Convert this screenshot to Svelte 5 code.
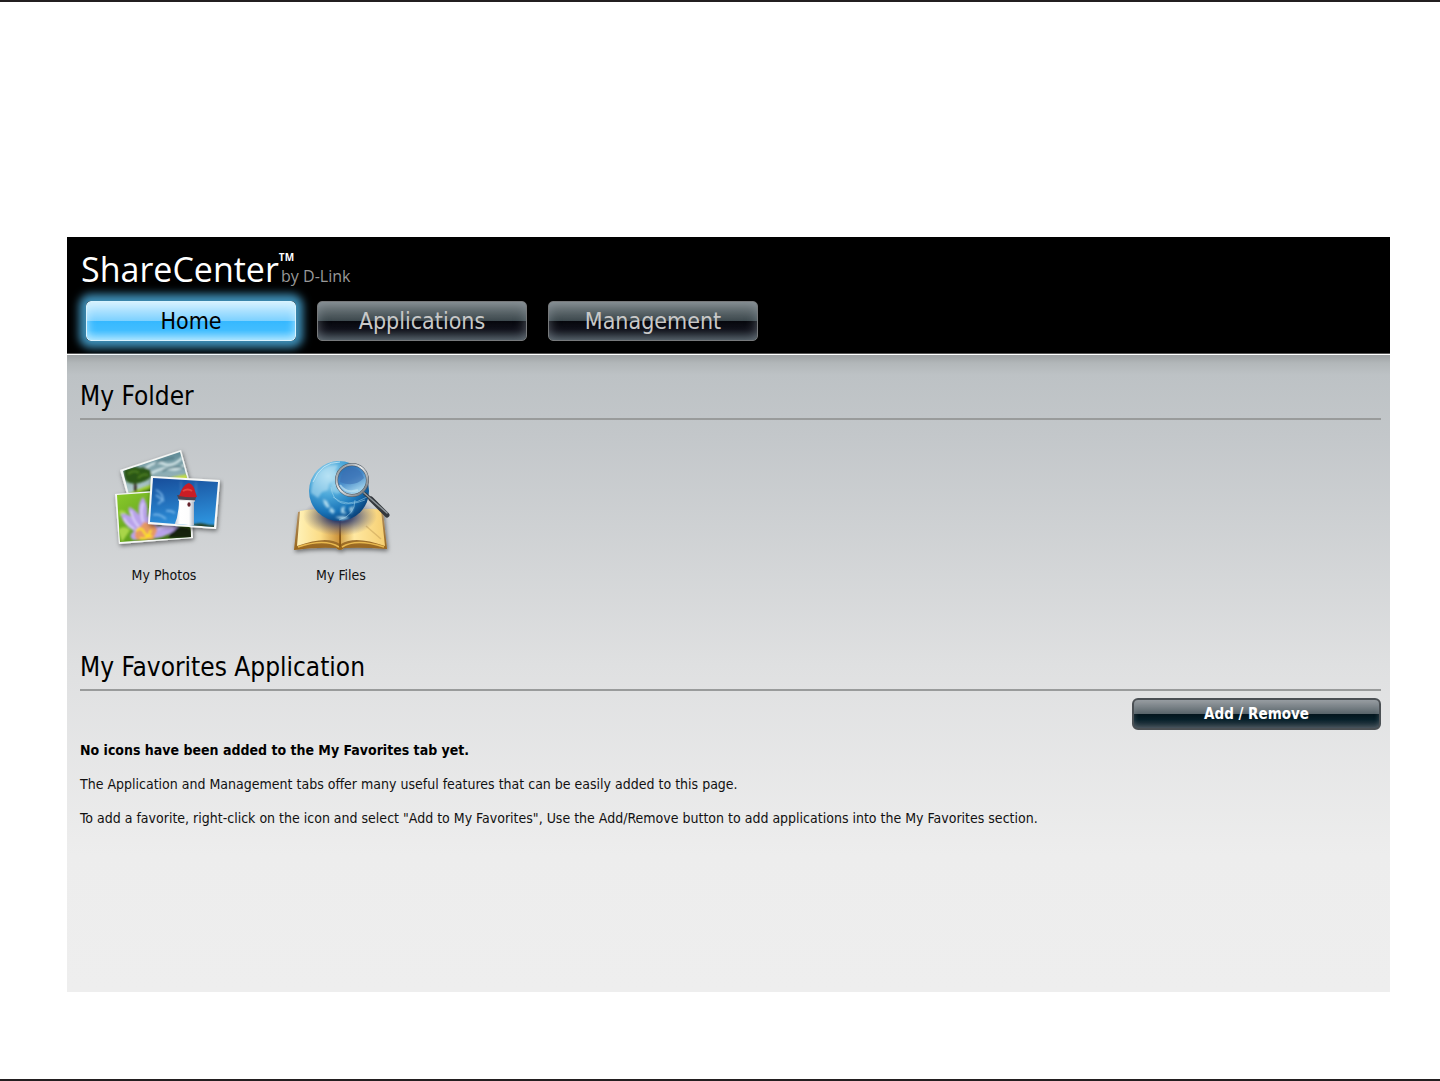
<script>
	const tabs = ['Home', 'Applications', 'Management'];

	let active = $state('Home');
</script>

<div class="page">
	<div class="frame">
		<header>
			<div class="logo">
				<span class="name">ShareCenter</span>
				<span class="tm">TM</span>
				<span class="by">by D-Link</span>
			</div>
			<nav>
				{#each tabs as tab}
					<button class="tab" class:active={tab === active} onclick={() => (active = tab)}>{tab}</button>
				{/each}
			</nav>
		</header>

		<main>
			<section class="folders">
				<h2>My Folder</h2>
				<div class="items">
					<a class="item" href="#photos">
						<svg viewBox="4 4 120 112" aria-hidden="true">
							<defs>
								<filter id="shadow" x="-20%" y="-20%" width="140%" height="150%">
									<feDropShadow dx="1" dy="2" stdDeviation="2" flood-opacity="0.5" />
								</filter>
								<filter id="soft" x="-20%" y="-20%" width="140%" height="140%">
									<feGaussianBlur stdDeviation="0.8" />
								</filter>
								<linearGradient id="storm" x1="0" y1="0" x2="0" y2="1">
									<stop offset="0" stop-color="#5b8793" />
									<stop offset="1" stop-color="#dcebe9" />
								</linearGradient>
								<linearGradient id="leaf" x1="0" y1="0" x2="1" y2="1">
									<stop offset="0" stop-color="#8fcf2c" />
									<stop offset="0.6" stop-color="#5c9c1c" />
									<stop offset="1" stop-color="#15310b" />
								</linearGradient>
								<linearGradient id="sky" x1="0" y1="0" x2="0.2" y2="1">
									<stop offset="0" stop-color="#164a97" />
									<stop offset="1" stop-color="#2e94de" />
								</linearGradient>
								<linearGradient id="tower" x1="0" y1="0" x2="1" y2="0">
									<stop offset="0" stop-color="#bfc7d3" />
									<stop offset="0.3" stop-color="#fff" />
									<stop offset="0.75" stop-color="#fdfdfd" />
									<stop offset="1" stop-color="#a9b4c4" />
								</linearGradient>
								<clipPath id="backClip"><path d="M23 31 80 12 90 49 32 67Z" /></clipPath>
								<clipPath id="lilyClip"><path d="M17 55 88 50 91 97 20 102Z" /></clipPath>
								<clipPath id="frontClip"><path d="M53 38 118 42 114 87 50 82Z" /></clipPath>
							</defs>

							<path d="M20 30 81 10 92 50 31 69Z" fill="#f4f6f4" filter="url(#shadow)" />
							<g clip-path="url(#backClip)">
								<path d="M20 10H95V70H20Z" fill="url(#storm)" />
								<g filter="url(#soft)">
									<path d="M45 29Q55 20 64 24T84 16M50 34Q62 27 70 29T86 24" fill="none" stroke="#d5e6e8" stroke-width="2.5" />
									<path d="M55 24Q62 19 74 18M62 31Q73 25 85 28" fill="none" stroke="#48737f" stroke-width="1.5" />
									<path d="M24 56Q56 40 92 33V70H20Z" fill="#9acb2c" />
									<path d="M26 61Q48 45 62 48L30 65Z" fill="#3c741a" />
									<path d="M66 41Q76 34 92 36V43Z" fill="#cfe64b" />
									<path d="M34 41 36 41 37 51 34 52Z" fill="#33251b" />
									<path d="M24 34Q22 28 29 28Q34 25 40 28Q47 26 51 32Q53 38 45 41Q36 45 30 43Q24 42 24 34Z" fill="#2b5716" />
									<path d="M28 34Q34 29 39 33M38 38Q43 33 48 35" fill="none" stroke="#4b7d20" stroke-width="2" />
								</g>
							</g>

							<path d="M15 54 90 48 93 98 19 104Z" fill="#f4f6f4" filter="url(#shadow)" />
							<g clip-path="url(#lilyClip)">
								<path d="M15 48H95V105H15Z" fill="url(#leaf)" />
								<g filter="url(#soft)">
									<path d="M19 71Q22 69 26 72L25 78 20 76ZM18 90Q24 84 30 90L22 102Z" fill="#a9d548" />
									<path d="M70 90Q80 84 92 90V98H69Z" fill="#132309" />
									<path d="M34 91Q22 84 21 74Q27 73 33 78Q27 72 29 67Q34 68 39 75Q37 63 43 57Q49 65 47 78Q52 67 61 69Q61 77 57 86Q67 82 79 86Q70 96 57 98L34 100Q27 97 34 91Z" fill="#b8a2ea" />
									<path d="M39 87Q32 79 31 71M43 82Q40 72 43 63M49 84Q53 76 57 73M58 89Q66 85 73 88M34 89Q26 84 24 78" fill="none" stroke="#ded2fb" stroke-width="2" />
									<path d="M35 98Q34 88 41 86Q44 80 48 83Q56 82 57 91L53 100H38Z" fill="#e79a62" />
									<path d="M36 91Q41 86 44 92T52 96M40 98Q47 101 51 90" fill="none" stroke="#ffe51d" stroke-width="2" />
								</g>
							</g>

							<path d="M51 36 120 40 116 89 48 84Z" fill="#f7f8f7" filter="url(#shadow)" />
							<g clip-path="url(#frontClip)">
								<path d="M48 36H121V90H48Z" fill="url(#sky)" />
								<g filter="url(#soft)">
									<path d="M56 50Q63 53 63 60L58 64M56 55 64 61M66 71Q70 70 75 73M53 75Q59 73 66 79" fill="none" stroke="#8fc6f1" stroke-width="1.8" opacity="0.75" />
									<path d="M81 41V51M96 42V54" stroke="#94b3d4" stroke-width="0.7" opacity="0.6" />
									<path d="M92 85Q99 82 105 84T117 85V89H91Z" fill="#263f20" />
								</g>
								<path d="M79 60H94L94 87 74 86Q79 75 79 60Z" fill="url(#tower)" />
								<path d="M77 55 96 57 95 61 79 60Z" fill="#4a4450" />
								<path d="M78 60 95 61" stroke="#eee" stroke-width="1" />
								<path d="M79 56 82 49Q85 44 89 43Q94 45 95 51L97 57Q89 58 79 56Z" fill="#c91d25" />
								<path d="M83 51Q88 48 92 51" fill="none" stroke="#e5453f" stroke-width="2" />
								<ellipse cx="89" cy="64.5" rx="1.6" ry="2.3" fill="#66232b" />
							</g>
						</svg>
						<span>My Photos</span>
					</a>
					<a class="item" href="#files">
						<svg viewBox="1 4 120 112" aria-hidden="true">
							<defs>
								<radialGradient id="globe" cx="0.32" cy="0.25" r="0.8">
									<stop offset="0" stop-color="#a9ddf3" />
									<stop offset="0.4" stop-color="#4ba7d9" />
									<stop offset="0.75" stop-color="#1974b8" />
									<stop offset="1" stop-color="#0a437c" />
								</radialGradient>
								<linearGradient id="cover" x1="0" y1="0" x2="0" y2="1">
									<stop offset="0" stop-color="#b49467" />
									<stop offset="1" stop-color="#98651b" />
								</linearGradient>
								<linearGradient id="sheet" x1="0" y1="0" x2="1" y2="0">
									<stop offset="0" stop-color="#fff2b8" />
									<stop offset="0.55" stop-color="#fbdc86" />
									<stop offset="1" stop-color="#c98e36" />
								</linearGradient>
								<linearGradient id="sheetRight" x1="0" y1="0" x2="1" y2="0">
									<stop offset="0" stop-color="#d6a64c" />
									<stop offset="0.3" stop-color="#ffe8a1" />
									<stop offset="1" stop-color="#f6cf72" />
								</linearGradient>
								<radialGradient id="globeShade">
									<stop offset="0.3" stop-color="#303c6b" stop-opacity="0.95" />
									<stop offset="1" stop-color="#6a6783" stop-opacity="0" />
								</radialGradient>
								<linearGradient id="lens" x1="0" y1="0" x2="0.5" y2="1">
									<stop offset="0" stop-color="#2361a5" />
									<stop offset="0.55" stop-color="#468bc9" />
									<stop offset="1" stop-color="#a9d8ee" />
								</linearGradient>
								<linearGradient id="rim" x1="0" y1="0" x2="1" y2="1">
									<stop offset="0" stop-color="#777f87" />
									<stop offset="0.45" stop-color="#e7eaec" />
									<stop offset="1" stop-color="#5e676f" />
								</linearGradient>
							</defs>

							<path d="M18 72Q40 67 60 73Q82 67 103 71L107 109Q84 107 64 108Q60 112 56 108Q35 107 14 110Z" fill="url(#cover)" filter="url(#shadow)" />
							<path d="M20 71Q42 66 60 75V104Q47 95 17 106Z" fill="url(#sheet)" />
							<path d="M61 75Q82 66 101 70L105 106Q75 95 61 104Z" fill="url(#sheetRight)" />
							<path d="M18 107Q45 98 59 107M62 107Q76 98 104 107" fill="none" stroke="#e8b84f" stroke-width="1.5" />
							<path d="M60 74V107" stroke="#85530f" stroke-width="1.5" />
							<path d="M86 86 101 99" stroke="#c29d55" stroke-width="1.5" opacity="0.5" />
							<ellipse cx="60" cy="76" rx="37" ry="20" fill="url(#globeShade)" />
							<circle cx="59" cy="51" r="30" fill="url(#globe)" />
							<g fill="#c4e8f5" filter="url(#soft)">
								<path d="M35 38Q40 29 49 26L58 25 55 31 61 34 55 41 49 43 48 50 42 52 38 58 31 53Q31 45 35 38Z" opacity="0.5" />
								<path d="M43 59 47 61 50 67 47 68 44 64ZM51 67 55 71 53 74 49 71ZM61 68 65 66 64 71 67 74 61 73ZM69 68 74 66 71 74ZM55 77 63 76 70 78 62 80Z" opacity="0.8" />
								<path d="M52 43Q61 40 66 47L64 51 57 54 51 51Z" opacity="0.4" />
							</g>
							<path d="M51 47Q54 72 85 60M53 57Q67 69 87 57M59 80Q75 75 75 60" fill="none" stroke="#a7d9ee" stroke-width="0.8" opacity="0.65" />
							<path d="M33 42Q41 22 60 22" fill="none" stroke="#d9f2fb" stroke-width="1" opacity="0.7" />
							<path d="M84 53 97 64" stroke="#343a40" stroke-width="3" />
							<path d="M91 59 107 75" stroke="#34383d" stroke-width="5" stroke-linecap="round" />
							<path d="M83 52 107 73" stroke="#8d9499" stroke-width="1.5" stroke-linecap="round" />
							<circle cx="72" cy="40" r="15.5" fill="url(#lens)" stroke="#4d555d" stroke-width="3" />
							<circle cx="72" cy="40" r="15.5" fill="none" stroke="url(#rim)" stroke-width="2" />
							<path d="M60 42Q61 29 73 28Q81 29 84 38Q74 48 60 42Z" fill="#3e70b3" opacity="0.6" />
							<path d="M60 45Q66 54 78 50" fill="none" stroke="#bfe2f1" stroke-width="2" opacity="0.7" />
						</svg>
						<span>My Files</span>
					</a>
				</div>
			</section>

			<section class="favorites">
				<h2>My Favorites Application</h2>
				<div class="actions">
					<button class="edit">Add / Remove</button>
				</div>
				<p><strong>No icons have been added to the My Favorites tab yet.</strong></p>
				<p>The Application and Management tabs offer many useful features that can be easily added to this page.</p>
				<p>To add a favorite, right-click on the icon and select "Add to My Favorites", Use the Add/Remove button to add applications into the My Favorites section.</p>
			</section>
		</main>
	</div>
</div>

<style>
	:global(body) {
		margin: 0;
		background: #fff;
	}

	.page {
		padding: 235px 50px 87px 67px;
		border-top: 2px solid #231f20;
		border-bottom: 2px solid #231f20;
		font-family: Tahoma, "DejaVu Sans Condensed", "Noto Sans", sans-serif;
		font-size: 14px;
		line-height: 20px;
		color: #111;
	}

	header {
		padding: 12px 19px 12px 14px;
		background: #000;
		border-bottom: 1px solid #555;
	}

	.logo {
		display: flex;
		align-items: baseline;
		height: 52px;
		font-family: "Open Sans", "Noto Sans", sans-serif;
		line-height: 40px;
		color: #fff;
	}

	.name {
		font-size: 34px;
	}

	.tm {
		align-self: flex-start;
		font-size: 10px;
		font-weight: 700;
		line-height: 16px;
	}

	.by {
		margin-left: -13px;
		font-size: 16px;
		color: #999;
	}

	nav {
		display: flex;
		gap: 21px;
		padding-left: 5px;
	}

	button {
		font-family: inherit;
		cursor: pointer;
	}

	.tab {
		width: 210px;
		height: 40px;
		padding: 0;
		border: 1px solid #77797b;
		border-radius: 5px;
		background: linear-gradient(#7d8588 0%, #3d494e 49%, #05060c 50%, #11121b 72%, #3a454d 100%);
		box-shadow: inset 0 0 12px rgba(150, 160, 170, 0.55);
		font-size: 23px;
		line-height: 36px;
		color: #c8c8c8;
	}

	.tab.active {
		border-color: #d8f3ff;
		background: linear-gradient(#d4f0ff 0%, #7dd1ff 49%, #35b8ff 50%, #43beff 75%, #8ad8ff 100%);
		box-shadow: 0 0 8px 7px #3d8db5, inset 0 0 10px rgba(210, 243, 255, 0.8);
		color: #000;
	}

	main {
		min-height: 638px;
		padding: 25px 9px 0 13px;
		box-sizing: border-box;
		border-top: 1px solid #fff;
		background: linear-gradient(#9da1a3 0, #b2b7b9 8px, #bdc2c5 20px, #c3c7ca 80px, #dfe0e1 310px, #ededed 500px, #eee 100%);
	}

	h2 {
		margin: 0;
		padding-bottom: 6px;
		border-bottom: 2px solid #999b9b;
		font-size: 26px;
		font-weight: 400;
		line-height: 32px;
		color: #000;
	}

	.items {
		display: flex;
		gap: 9px;
		padding: 24px 0 66px;
	}

	.item {
		display: flex;
		flex-direction: column;
		align-items: center;
		gap: 9px;
		width: 168px;
		color: inherit;
		text-decoration: none;
	}

	.item svg {
		width: 120px;
		height: 112px;
	}

	.actions {
		display: flex;
		justify-content: flex-end;
		padding: 7px 0 10px;
	}

	.edit {
		width: 249px;
		height: 32px;
		padding: 0;
		border: 2px solid #4b5054;
		border-radius: 6px;
		background: linear-gradient(#9a9fa3 0%, #59656b 49%, #03151d 50%, #07202a 70%, #3c4850 100%);
		box-shadow: inset 0 0 5px rgba(130, 140, 150, 0.4);
		font-size: 15px;
		font-weight: 700;
		color: #fff;
	}

	p {
		margin: 0 0 14px;
	}

	strong {
		color: #000;
	}
</style>
